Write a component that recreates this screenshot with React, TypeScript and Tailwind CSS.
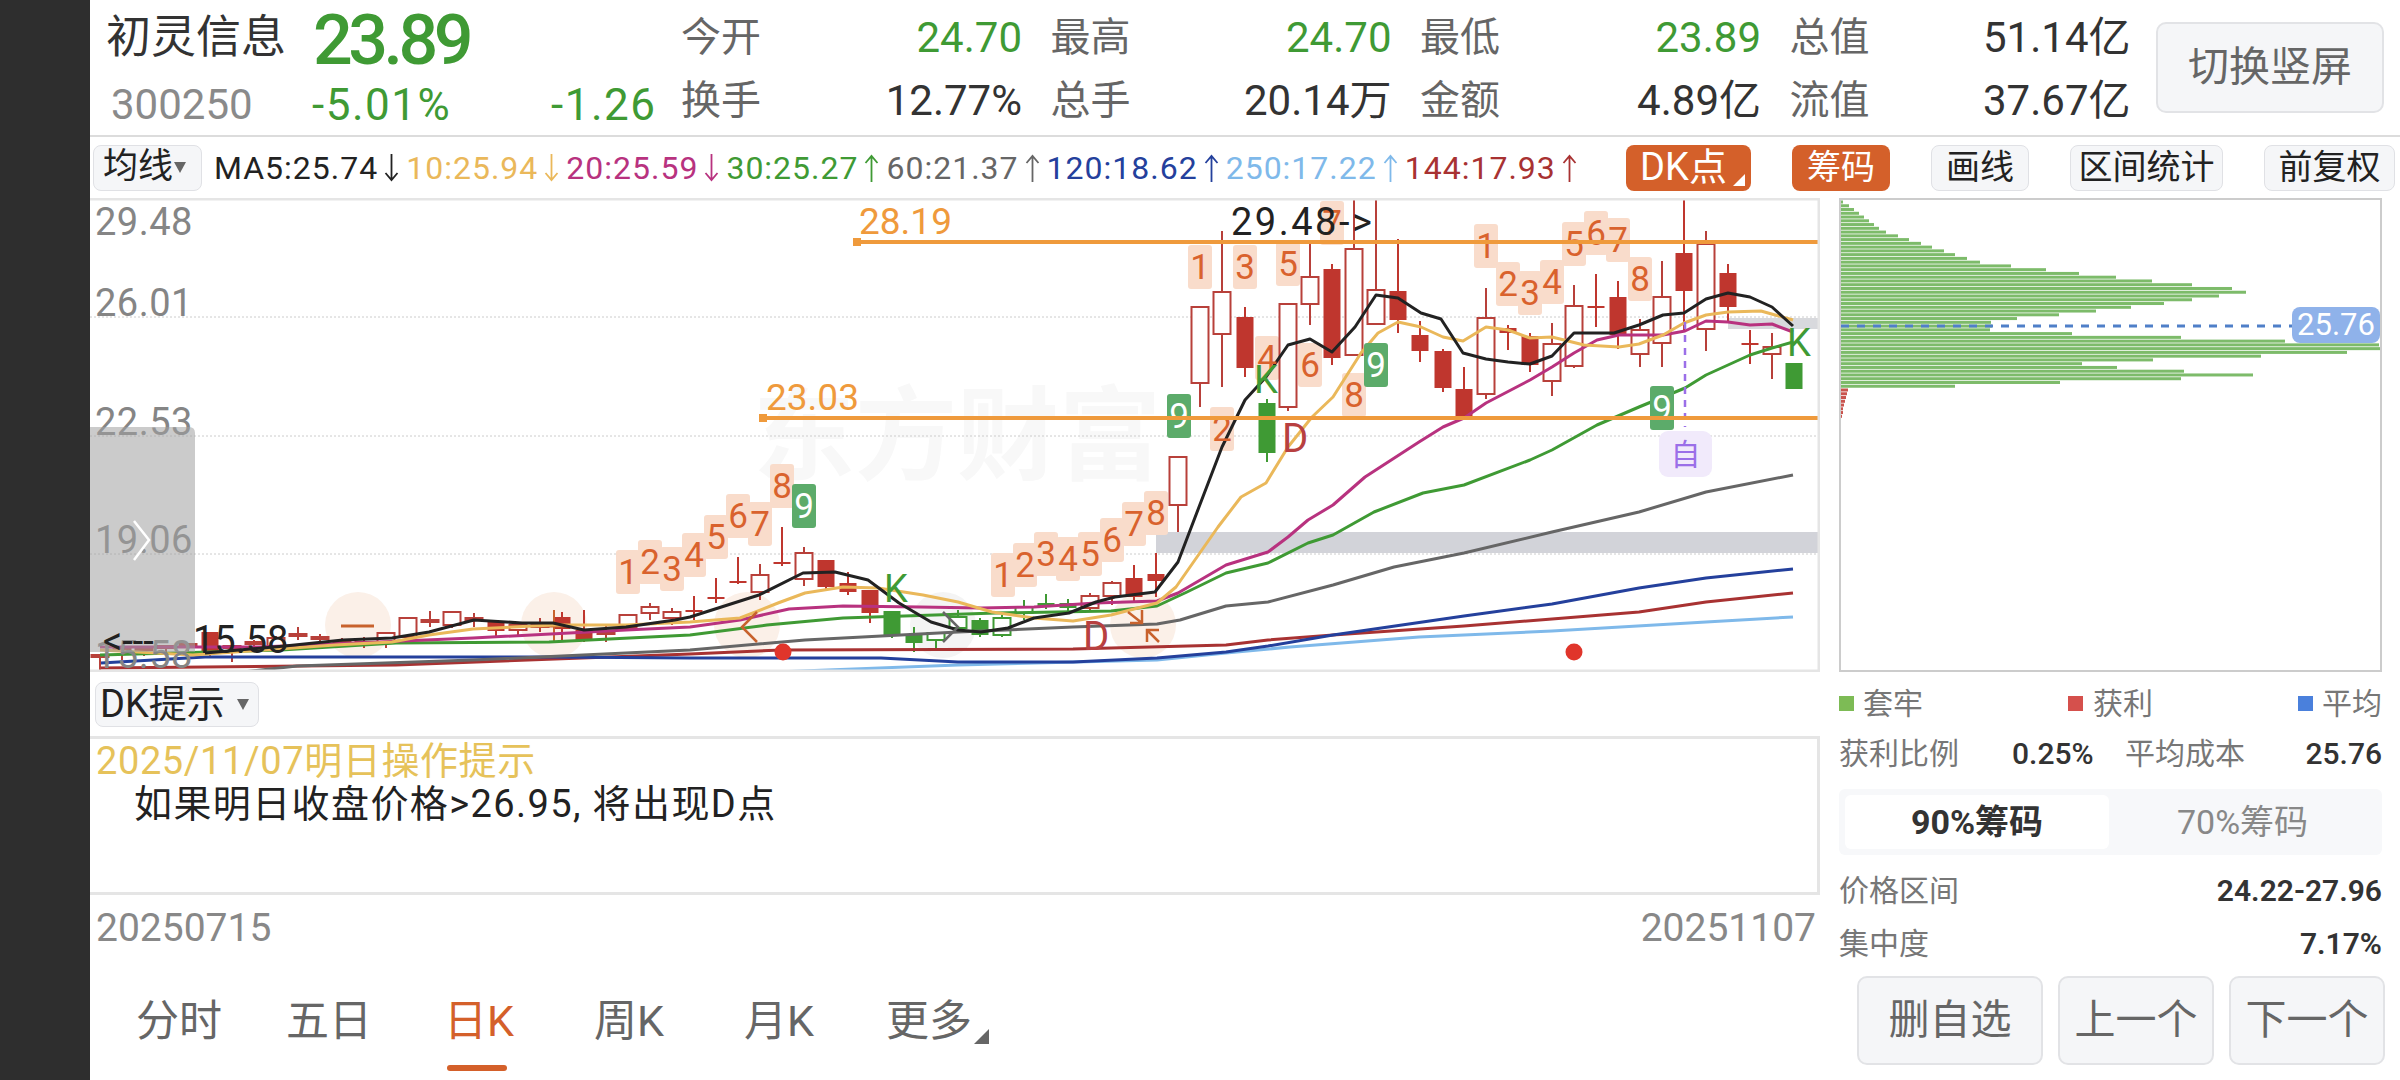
import React from 'react';

type Candle = [number, number, number, number, number, 'h' | 'f' | 'g' | 'o'];

// x, wick top, body top, body bottom, wick bottom, kind
const candles: Candle[] = [
  [100, 655, 655, 657, 672, 'h'], [122, 648, 648, 650, 660, 'h'], [144, 648, 648, 650, 656, 'h'], [166, 646, 646, 648, 654, 'h'],
  [188, 644, 644, 646, 652, 'h'], [210, 632, 632, 653, 656, 'f'], [232, 640, 646, 648, 662, 'h'], [254, 640, 642, 644, 652, 'h'],
  [276, 636, 638, 646, 650, 'h'], [298, 627, 634, 635, 640, 'h'], [320, 634, 637, 638, 642, 'h'], [342, 638, 642, 643, 646, 'h'],
  [364, 637, 642, 643, 648, 'h'], [386, 633, 633, 643, 648, 'h'], [408, 618, 618, 637, 640, 'h'], [430, 611, 620, 621, 627, 'h'],
  [452, 611, 612, 625, 628, 'h'], [474, 613, 618, 619, 627, 'h'], [496, 622, 622, 631, 637, 'f'], [518, 624, 625, 630, 635, 'h'],
  [540, 618, 625, 627, 632, 'h'], [562, 612, 617, 629, 640, 'f'], [584, 610, 630, 640, 642, 'f'], [606, 625, 632, 633, 642, 'h'],
  [628, 614, 615, 628, 630, 'h'], [650, 603, 607, 613, 620, 'h'], [672, 608, 612, 618, 625, 'h'], [694, 596, 610, 611, 620, 'f'],
  [716, 578, 597, 599, 603, 'f'], [738, 557, 581, 583, 584, 'f'], [760, 564, 575, 592, 600, 'h'], [782, 527, 562, 564, 566, 'f'],
  [804, 547, 553, 579, 586, 'h'], [826, 560, 560, 587, 590, 'f'], [848, 572, 583, 592, 595, 'f'], [870, 590, 590, 613, 623, 'f'],
  [892, 611, 611, 635, 638, 'g'], [914, 627, 635, 643, 652, 'g'], [936, 633, 633, 640, 648, 'o'], [958, 610, 617, 628, 630, 'o'],
  [980, 618, 620, 635, 637, 'g'], [1002, 615, 618, 635, 637, 'o'], [1024, 600, 607, 613, 620, 'o'], [1046, 594, 603, 607, 609, 'g'],
  [1068, 599, 603, 608, 611, 'g'], [1090, 593, 596, 608, 610, 'h'], [1112, 581, 583, 596, 605, 'h'], [1134, 565, 578, 597, 603, 'f'],
  [1156, 553, 574, 581, 597, 'f'], [1178, 457, 457, 505, 532, 'h'], [1200, 307, 307, 383, 407, 'h'], [1222, 231, 292, 334, 387, 'h'],
  [1245, 307, 317, 368, 377, 'f'], [1267, 399, 403, 453, 462, 'g'], [1288, 304, 304, 407, 411, 'h'], [1310, 243, 277, 304, 325, 'h'],
  [1332, 264, 269, 358, 365, 'f'], [1354, 200, 249, 355, 355, 'h'], [1376, 200, 290, 324, 324, 'h'], [1398, 239, 291, 320, 333, 'f'],
  [1420, 321, 335, 351, 362, 'f'], [1443, 349, 351, 388, 392, 'f'], [1464, 367, 389, 417, 420, 'f'], [1486, 288, 318, 394, 399, 'h'],
  [1508, 325, 328, 333, 350, 'f'], [1530, 333, 336, 365, 372, 'f'], [1552, 323, 344, 381, 396, 'h'], [1574, 285, 306, 366, 368, 'h'],
  [1596, 274, 306, 308, 327, 'f'], [1618, 281, 297, 335, 349, 'f'], [1640, 319, 330, 354, 367, 'h'], [1662, 261, 297, 343, 367, 'h'],
  [1684, 200, 253, 291, 330, 'f'], [1706, 231, 244, 329, 351, 'h'], [1728, 264, 273, 307, 323, 'f'], [1750, 330, 343, 345, 364, 'f'],
  [1772, 333, 347, 354, 379, 'h'], [1794, 363, 363, 389, 389, 'g'],
];

const maLines: { color: string; d: string }[] = [
  { color: '#7fb9ea', d: '747,673 958,665 1157,660 1226,653 1290,647 1419,637 1552,631 1706,622 1793,617' },
  { color: '#a83232', d: '101,668 396,665 690,654 782,650 1073,649 1226,645 1268,640 1333,635 1464,626 1552,619 1639,612 1706,602 1793,593' },
  { color: '#24409c', d: '101,663 205,657 549,657 690,658 881,658 958,662 1073,662 1157,658 1226,652 1268,646 1333,635 1464,616 1552,604 1639,588 1706,578 1793,569' },
  { color: '#666666', d: '243,672 297,666 473,660 690,650 805,640 958,632 1073,627 1157,624 1180,620 1226,606 1268,602 1333,585 1394,567 1464,553 1552,532 1639,512 1706,492 1793,475' },
  { color: '#3f9a34', d: '100,655 281,650 396,643 549,642 690,635 767,625 843,618 996,613 1111,611 1157,606 1187,592 1226,573 1268,563 1308,543 1333,535 1374,512 1423,493 1464,485 1530,460 1552,450 1597,425 1639,407 1685,388 1706,375 1750,355 1772,348 1793,342' },
  { color: '#b8327f', d: '100,647 260,647 473,638 626,630 690,627 740,620 789,609 843,606 920,607 981,608 1034,607 1096,603 1157,601 1178,593 1226,565 1268,552 1288,537 1308,520 1333,505 1365,477 1419,442 1443,427 1464,418 1486,403 1530,380 1552,367 1574,353 1597,340 1619,335 1663,335 1685,331 1706,321 1728,322 1750,325 1772,324 1793,332' },
  { color: '#eab85a', d: '100,650 193,655 335,645 392,642 429,635 473,629 553,625 626,625 690,622 740,618 778,603 805,593 843,587 878,588 923,595 958,602 992,612 1034,618 1073,621 1111,615 1157,603 1176,587 1218,527 1241,497 1266,483 1288,447 1312,417 1333,397 1361,353 1378,333 1398,322 1421,327 1443,337 1463,341 1486,327 1508,330 1530,338 1552,337 1584,345 1619,347 1639,344 1663,335 1684,323 1706,315 1728,312 1761,311 1793,320' },
  { color: '#222222', d: '205,653 285,646 343,640 392,638 429,632 474,620 522,623 553,623 584,630 626,627 675,620 690,617 759,595 803,573 835,572 868,580 899,603 931,622 958,630 981,632 1008,628 1034,618 1069,613 1096,602 1115,597 1155,592 1178,562 1199,507 1222,447 1245,400 1266,377 1288,345 1310,339 1332,352 1355,327 1376,295 1398,298 1421,313 1441,319 1463,353 1486,359 1508,362 1530,364 1552,356 1574,333 1614,333 1639,325 1663,315 1684,313 1706,299 1728,293 1750,297 1772,307 1793,326' },
];

// x centre, box top, digit
const counts: [number, number, string][] = [
  [628, 550, '1'], [650, 540, '2'], [672, 547, '3'], [694, 533, '4'], [716, 515, '5'], [738, 494, '6'], [760, 502, '7'], [782, 464, '8'],
  [1003, 553, '1'], [1025, 543, '2'], [1046, 532, '3'], [1068, 537, '4'], [1090, 532, '5'], [1112, 518, '6'], [1134, 502, '7'], [1156, 491, '8'],
  [1200, 245, '1'], [1222, 407, '2'], [1245, 245, '3'], [1267, 336, '4'], [1288, 242, '5'], [1310, 343, '6'], [1332, 201, '7'], [1354, 373, '8'],
  [1486, 224, '1'], [1508, 262, '2'], [1530, 271, '3'], [1552, 260, '4'], [1574, 222, '5'], [1596, 211, '6'], [1618, 218, '7'], [1640, 257, '8'],
];

const nines: [number, number][] = [[804, 484], [1179, 394], [1376, 343], [1662, 386]];

const chipGreen = [
  2, 8, 13, 18, 23, 28, 33, 38, 45, 57, 68, 80, 91, 103, 114, 126, 139, 170, 205, 238, 275, 311, 351, 391, 405, 378, 351, 323, 290, 255,
  218, 176, 150, 151, 149, 231, 340, 444, 538, 543, 506, 420, 312, 241, 276, 343, 412, 340, 219, 114,
];
const chipRed = [7, 6, 5, 4, 3, 2, 2, 1];

const axisLabels: [string, number][] = [['29.48', 222], ['26.01', 303], ['22.53', 422], ['19.06', 540], ['15.58', 655]];

const maLegend: { text: string; color: string; up: boolean }[] = [
  { text: 'MA5:25.74', color: '#222222', up: false },
  { text: '10:25.94', color: '#eab85a', up: false },
  { text: '20:25.59', color: '#b8327f', up: false },
  { text: '30:25.27', color: '#3f9a34', up: true },
  { text: '60:21.37', color: '#666666', up: true },
  { text: '120:18.62', color: '#24409c', up: true },
  { text: '250:17.22', color: '#7fb9ea', up: true },
  { text: '144:17.93', color: '#a83232', up: true },
];

const quotes: [string, string, boolean][] = [
  ['今开', '24.70', true], ['最高', '24.70', true], ['最低', '23.89', true], ['总值', '51.14亿', false],
  ['换手', '12.77%', false], ['总手', '20.14万', false], ['金额', '4.89亿', false], ['流值', '37.67亿', false],
];

const KChart: React.FC = () => (
  <svg viewBox="90 198 1730 474" className="block w-[1730px] h-[474px]">
    <text x="957" y="437" textAnchor="middle" dominantBaseline="central" fontSize="102" fontWeight="700" fill="#f8f8f8">东方财富</text>
    {[317, 436, 554].map((y) => (
      <line key={y} x1="90" x2="1820" y1={y} y2={y} stroke="#cccccc" strokeWidth="1" strokeDasharray="2 2" />
    ))}
    <circle cx="358" cy="625" r="33" fill="#fbf0e8" />
    <circle cx="554" cy="625" r="33" fill="#fbf0e8" />
    <circle cx="747" cy="625" r="33" fill="#fbf0e8" />
    <circle cx="943" cy="625" r="33" fill="#f4f4f4" />
    <circle cx="1143" cy="625" r="33" fill="#fbf0e8" />
    <rect x="1156" y="532" width="664" height="21" fill="#d2d3d9" />
    <rect x="1728" y="318" width="92" height="11" fill="#d8d9dd" />
    {counts.map(([x, y]) => (
      <rect key={`${x}-${y}`} x={x - 12} y={y} width="24" height="44" rx="3" fill="#f9dccb" />
    ))}
    {candles.map(([x, wt, bt, bb, wb, kind]) => {
      const green = kind === 'g' || kind === 'o';
      const color = green ? '#3f9a34' : kind === 'f' ? '#bf362e' : '#b8403a';
      const filled = kind === 'f' || kind === 'g';
      return (
        <g key={x}>
          <line x1={x} x2={x} y1={wt} y2={wb} stroke={color} strokeWidth="2" />
          <rect x={x - 8.5} y={bt} width="17" height={Math.max(bb - bt, 2)} fill={filled ? color : '#ffffff'} stroke={color} strokeWidth={filled ? 0 : 2} />
        </g>
      );
    })}
    <line x1="341" x2="374" y1="626" y2="626" stroke="#c8622d" strokeWidth="3" />
    <line x1="538" x2="572" y1="626" y2="626" stroke="#c8622d" strokeWidth="3" />
    <line x1="554" x2="554" y1="610" y2="642" stroke="#c8622d" strokeWidth="2" />
    {maLines.map((m) => (
      <polyline key={m.color} points={m.d} fill="none" stroke={m.color} strokeWidth="3" strokeLinejoin="round" />
    ))}
    <line x1="1685" x2="1685" y1="322" y2="427" stroke="#9b6fe8" strokeWidth="2.5" strokeDasharray="7 6" />
    <rect x="1659" y="431" width="53" height="46" rx="9" fill="#f1eafb" />
    <text x="1685.5" y="454" textAnchor="middle" dominantBaseline="central" fontSize="30" fill="#9b6fe8">自</text>
    {counts.map(([x, y, n]) => (
      <text key={`t${x}-${y}`} x={x} y={y + 22} textAnchor="middle" dominantBaseline="central" fontSize="35" fill="#d9622d">{n}</text>
    ))}
    {nines.map(([x, y]) => (
      <g key={x}>
        <rect x={x - 12} y={y} width="24" height="44" rx="3" fill="#5cab6a" />
        <text x={x} y={y + 22} textAnchor="middle" dominantBaseline="central" fontSize="35" fill="#ffffff">9</text>
      </g>
    ))}
    <text x="1254" y="380" dominantBaseline="central" fontSize="38" fill="#3f9a34">K</text>
    <text x="884" y="589" dominantBaseline="central" fontSize="38" fill="#3f9a34">K</text>
    <text x="1787" y="343" dominantBaseline="central" fontSize="38" fill="#3f9a34">K</text>
    <text x="1282" y="438" dominantBaseline="central" fontSize="40" fill="#b84040">D</text>
    <text x="1083" y="636" dominantBaseline="central" fontSize="40" fill="#b84040">D</text>
    <polyline points="757,612 742,627 757,642" fill="none" stroke="#c8622d" strokeWidth="2.5" />
    <polyline points="943,612 958,627 943,642" fill="none" stroke="#666666" strokeWidth="2.5" />
    <path d="M1128,612 L1142,623 M1142,610 L1142,623 L1130,623" fill="none" stroke="#c8622d" strokeWidth="2.5" />
    <path d="M1159,642 L1147,630 M1147,642 L1147,630 L1159,630" fill="none" stroke="#c8622d" strokeWidth="2.5" />
    <circle cx="783" cy="652" r="8.5" fill="#e0352b" />
    <circle cx="1574" cy="652" r="8.5" fill="#e0352b" />
    <line x1="857" x2="1820" y1="242" y2="242" stroke="#ef9a3c" strokeWidth="4" />
    <rect x="853" y="238" width="8" height="8" fill="#ef9a3c" />
    <line x1="763" x2="1820" y1="418" y2="418" stroke="#ef9a3c" strokeWidth="4" />
    <rect x="759" y="414" width="8" height="8" fill="#ef9a3c" />
    <text x="859" y="234" fontSize="37" fill="#ef9a3c">28.19</text>
    <text x="766" y="410" fontSize="37" fill="#ef9a3c">23.03</text>
    <text x="1231" y="235" fontSize="38" letterSpacing="2.5" fill="#222222">29.48-&gt;</text>
    {axisLabels.map(([t, y]) => (
      <text key={t} x="95" y={y} dominantBaseline="central" fontSize="38" letterSpacing="0.5" fill="#858585">{t}</text>
    ))}
    <path d="M90,427 H189 Q195,427 195,433 V652 H90 Z" fill="#a0a0a0" fillOpacity="0.55" />
    <polyline points="134,521 149,540 134,560" fill="none" stroke="#ffffff" strokeWidth="2.5" />
    <text x="103" y="641" dominantBaseline="central" fontSize="38" fill="#222222">&lt;---</text>
    <text x="193" y="640" dominantBaseline="central" fontSize="38" fill="#222222">15.58</text>
    <path d="M1820,199 H90 M1820,671 H90 M1819,199 V671" fill="none" stroke="#e5e5e5" strokeWidth="3" />
  </svg>
);

const ChipChart: React.FC = () => (
  <div className="relative w-[543px] h-[474px] border-2 border-[#cccccc]">
    <svg viewBox="0 0 539 470" className="block w-[539px] h-[470px]">
      {chipGreen.map((w, i) => (
        <rect key={i} x="0" y={0.5 + i * 3.76} width={w} height="3" fill="#7dbb6a" />
      ))}
      {chipRed.map((w, i) => (
        <rect key={i} x="0" y={188.5 + i * 3.76} width={w} height="3" fill="#c9544e" />
      ))}
      <line x1="0" x2="455" y1="126" y2="126" stroke="#4f7fc8" strokeWidth="3" strokeDasharray="8 8" />
    </svg>
    <div className="absolute right-0 top-[107px] w-[88px] h-[36px] rounded-lg bg-[#8fb2ea] text-white text-[31px] leading-[36px] text-center">25.76</div>
  </div>
);

const Arrow: React.FC<{ color: string; up: boolean }> = ({ color, up }) => (
  <svg width="15" height="28" viewBox="0 0 15 28" className={up ? 'shrink-0' : 'shrink-0 rotate-180'}>
    <path d="M7.5,28 V2 M1.5,9 L7.5,2 L13.5,9" fill="none" stroke={color} strokeWidth="1.8" />
  </svg>
);

const ToolButton: React.FC<{ w: string; children: React.ReactNode }> = ({ w, children }) => (
  <div className={`${w} h-[46px] rounded-lg bg-[#f5f6f8] border border-[#e0e1e5] flex items-center justify-center text-[34px] text-[#222222]`}>
    {children}
  </div>
);

const App: React.FC = () => {
  return (
    <div className="flex w-[2400px] h-[1080px] overflow-hidden bg-white font-[Roboto,'Noto_Sans_CJK_SC',sans-serif]">
      <aside className="w-[90px] shrink-0 bg-[#2e2e2e]" />
      <main className="flex-1 flex flex-col min-w-0">
        <header className="h-[137px] shrink-0 flex border-b-2 border-[#dcdcdc]">
          <div className="w-[591px] shrink-0 pl-[16px]">
            <div className="h-[76px] flex items-center">
              <span className="w-[207px] text-[45px] leading-[52px] text-[#333333]">初灵信息</span>
              <span className="text-[70px] leading-[72px] mt-[4px] font-medium tracking-[-4.5px] text-[#3f9a34]">23.89</span>
            </div>
            <div className="h-[58px] flex items-center text-[44px] leading-[50px] tracking-[1.5px] text-[#3f9a34]">
              <span className="w-[206px] pl-[5px] text-[42px] tracking-normal text-[#8a8a8a]">300250</span>
              <span className="w-[239px]">-5.01%</span>
              <span>-1.26</span>
            </div>
          </div>
          <div className="grid grid-cols-[repeat(4,341px)] grid-rows-[76px_50px] gap-x-[28.5px] w-[1450px] shrink-0">
            {quotes.map(([label, value, green]) => (
              <div key={label} className="flex items-center justify-between text-[42px] leading-[48px]">
                <span className="text-[40px] text-[#666666]">{label}</span>
                <span className={green ? 'text-[#3f9a34]' : 'text-[#333333]'}>{value}</span>
              </div>
            ))}
          </div>
          <div className="ml-[25px] mt-[22px] w-[228px] h-[91px] rounded-[10px] bg-[#f5f6f8] border-2 border-[#e2e3e6] flex items-center justify-center text-[41px] text-[#666666]">
            切换竖屏
          </div>
        </header>
        <div className="h-[61px] shrink-0 flex items-center pl-[3px] pr-[5px]">
          <div className="w-[109px] h-[46px] rounded-lg bg-[#f5f6f8] border border-[#e0e1e5] flex items-center pl-[9px] gap-[1px] text-[35px] text-[#222222]">
            均线
            <span className="w-0 h-0 border-x-[6px] border-x-transparent border-t-[11px] border-t-[#666666]" />
          </div>
          <div className="flex items-center gap-[7px] ml-[12px]">
            {maLegend.map((m) => (
              <div key={m.text} className="flex items-center gap-[6px] text-[32px] leading-none tracking-[1px]" style={{ color: m.color }}>
                {m.text}
                <Arrow color={m.color} up={m.up} />
              </div>
            ))}
          </div>
          <div className="ml-auto flex items-center gap-[41px]">
            <div className="relative w-[125px] h-[46px] rounded-lg bg-[#d4602a] flex items-center justify-center text-[38px] text-white pr-[10px]">
              DK点
              <span className="absolute right-[6px] bottom-[5px] w-0 h-0 border-l-[12px] border-l-transparent border-b-[12px] border-b-white" />
            </div>
            <div className="w-[98px] h-[46px] rounded-lg bg-[#d4602a] flex items-center justify-center text-[34px] text-white">筹码</div>
            <ToolButton w="w-[98px]">画线</ToolButton>
            <ToolButton w="w-[153px]">区间统计</ToolButton>
            <ToolButton w="w-[131px]">前复权</ToolButton>
          </div>
        </div>
        <div className="flex-1 flex min-h-0">
          <div className="w-[1730px] shrink-0 flex flex-col">
            <KChart />
            <div className="h-[64px] shrink-0 pl-[5px] pt-[10px]">
              <div className="w-[164px] h-[45px] rounded-lg bg-[#f5f6f8] border border-[#e0e1e5] flex items-center pl-[4px] text-[38px] text-[#222222]">
                DK提示
                <span className="ml-[12px] w-0 h-0 border-x-[6px] border-x-transparent border-t-[11px] border-t-[#666666]" />
              </div>
            </div>
            <div className="h-[159px] shrink-0 border-y-[3px] border-r-[3px] border-[#e5e5e5] pl-[6px] pt-[2px]">
              <div className="text-[38px] leading-[40px] tracking-[0.6px] text-[#e6c25a]">2025/11/07明日操作提示</div>
              <div className="pl-[38px] pt-[1px] text-[38px] leading-[44px] tracking-[1.4px] text-[#222222]">如果明日收盘价格&gt;26.95, 将出现D点</div>
            </div>
            <div className="h-[66px] shrink-0 flex items-center justify-between pl-[6px] pr-[4px] text-[39px] text-[#888888]">
              <span>20250715</span>
              <span>20251107</span>
            </div>
            <nav className="flex-1 flex pl-[14px] text-[43px] text-[#666666]">
              <div className="w-[150px] pt-[28px] text-center">分时</div>
              <div className="w-[150px] pt-[28px] text-center">五日</div>
              <div className="w-[150px] pt-[28px] text-center text-[#d4602a] relative">
                日K
                <span className="absolute left-[43px] bottom-[9px] w-[60px] h-[6px] rounded-full bg-[#d4602a]" />
              </div>
              <div className="w-[150px] pt-[28px] text-center">周K</div>
              <div className="w-[150px] pt-[28px] text-center">月K</div>
              <div className="w-[150px] pt-[28px] text-center relative">
                更多
                <span className="absolute left-[120px] top-[68px] w-0 h-0 border-l-[15px] border-l-transparent border-b-[15px] border-b-[#666666]" />
              </div>
            </nav>
          </div>
          <div className="flex-1 flex flex-col pl-[19px] pr-[18px]">
            <ChipChart />
            <div className="h-[62px] shrink-0 flex items-center justify-between text-[30px] text-[#777777]">
              <div className="flex items-center gap-[9px]"><span className="w-[15px] h-[15px] bg-[#7dbb55]" />套牢</div>
              <div className="flex items-center gap-[10px]"><span className="w-[15px] h-[15px] bg-[#d5504c]" />获利</div>
              <div className="flex items-center gap-[9px]"><span className="w-[15px] h-[15px] bg-[#4a80dc]" />平均</div>
            </div>
            <div className="h-[38px] shrink-0 flex items-center text-[30px] text-[#777777]">
              <span className="w-[173px]">获利比例</span>
              <span className="w-[113px] font-medium text-[#333333]">0.25%</span>
              <span>平均成本</span>
              <span className="ml-auto font-medium text-[#333333]">25.76</span>
            </div>
            <div className="mt-[17px] h-[66px] shrink-0 rounded-md bg-[#f7f8fa] p-[6px] flex text-[34px] text-[#888888]">
              <div className="w-[264px] rounded-md bg-white flex items-center justify-center font-bold text-[#333333]">90%筹码</div>
              <div className="flex-1 flex items-center justify-center">70%筹码</div>
            </div>
            <div className="mt-[15px] h-[40px] shrink-0 flex items-center justify-between text-[30px] text-[#777777]">
              <span>价格区间</span>
              <span className="font-semibold text-[#333333]">24.22-27.96</span>
            </div>
            <div className="mt-[13px] h-[40px] shrink-0 flex items-center justify-between text-[30px] text-[#777777]">
              <span>集中度</span>
              <span className="font-semibold text-[#333333]">7.17%</span>
            </div>
            <div className="mt-[13px] flex justify-end gap-[15px] -mr-[3px] text-[41px] text-[#666666]">
              <div className="w-[186px] h-[89px] rounded-[10px] bg-[#f5f6f8] border-2 border-[#e2e3e6] flex items-center justify-center">删自选</div>
              <div className="w-[156px] h-[89px] rounded-[10px] bg-[#f5f6f8] border-2 border-[#e2e3e6] flex items-center justify-center">上一个</div>
              <div className="w-[156px] h-[89px] rounded-[10px] bg-[#f5f6f8] border-2 border-[#e2e3e6] flex items-center justify-center">下一个</div>
            </div>
          </div>
        </div>
      </main>
    </div>
  );
};

export default App;
